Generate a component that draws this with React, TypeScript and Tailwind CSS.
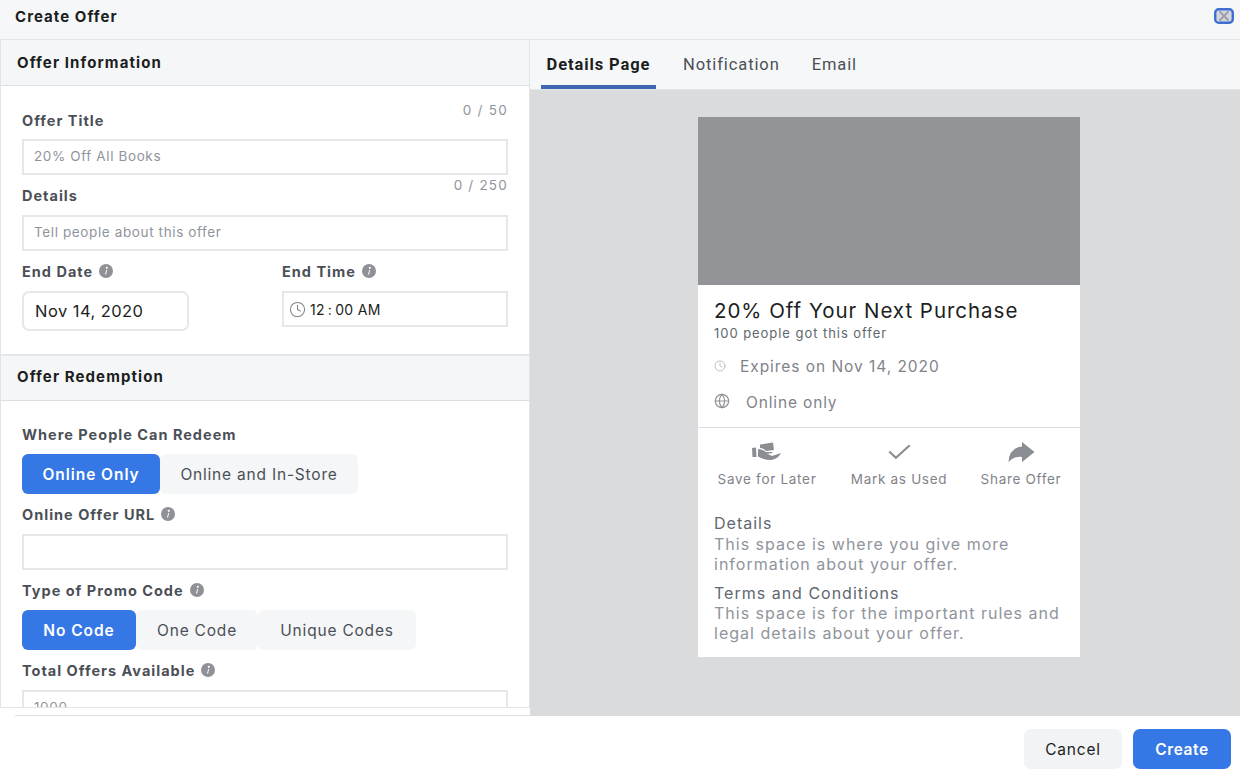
import React from "react";
import { Clock, Globe } from "lucide-react";

const font = { fontFamily: "Inter, 'Liberation Sans', sans-serif" };
const roboto = { fontFamily: "Roboto, 'Liberation Sans', sans-serif" };

function Info() {
  return (
    <svg width="14" height="14" viewBox="0 0 14 14" className="shrink-0 -mt-[2px]">
      <circle cx="7" cy="7" r="7" fill="#8f9196" />
      <circle cx="7.8" cy="3.8" r="1.1" fill="#fff" />
      <path d="M7.2 6 L8.1 6 L7.1 10.6 L6 10.6 Z" fill="#fff" />
    </svg>
  );
}

function Label({ children, info }: { children: React.ReactNode; info?: boolean }) {
  return (
    <div className="flex items-center gap-[6px] h-[20px] text-[14.5px] font-bold text-[#4b4f56] tracking-[1px] whitespace-nowrap">
      <span>{children}</span>
      {info && <Info />}
    </div>
  );
}

function Field({ placeholder, className = "" }: { placeholder?: string; className?: string }) {
  return (
    <div className={`h-[36px] border-2 border-[#e6e7e9] bg-white flex items-center px-[10px] pb-[2px] text-[13.5px] text-[#90949c] tracking-[0.62px] ${className}`}>
      {placeholder}
    </div>
  );
}

function SectionHead({ children, className = "" }: { children: React.ReactNode; className?: string }) {
  return (
    <div className={`bg-[#f5f6f7] border-b border-[#dddfe2] pl-[16px] flex items-center text-[15px] font-bold text-[#1c1e21] tracking-[1.1px] shrink-0 ${className}`}>
      {children}
    </div>
  );
}

function Seg({ children, on, w }: { children: React.ReactNode; on?: boolean; w: string }) {
  return (
    <div
      className={`h-[40px] pt-[1px] rounded-[6px] flex items-center justify-center text-[15.5px] whitespace-nowrap ${w} ${
        on ? "bg-[#3578e5] text-white font-semibold tracking-[0.95px]" : "bg-[#f5f6f7] text-[#4b4f56] tracking-[0.8px]"
      }`}
    >
      {children}
    </div>
  );
}

function Action({ icon, label, w }: { icon: React.ReactNode; label: string; w: string }) {
  return (
    <div className={`flex flex-col items-center ${w}`}>
      <div className="h-[24px] flex items-center justify-center">{icon}</div>
      <div className="mt-[5px] text-[13.5px] text-[#7f8389] tracking-[0.7px] whitespace-nowrap">{label}</div>
    </div>
  );
}

export default function App() {
  return (
    <div className="w-[1240px] h-[780px] bg-white flex flex-col overflow-hidden" style={font}>
      <div className="h-[40px] shrink-0 bg-[#f6f7f8] border-b border-[#e3e4e6] flex items-center justify-between pl-[15px] pr-[6px]">
        <span className="text-[15px] font-bold text-[#1c1e21] -mt-[5px] tracking-[1.05px]">Create Offer</span>
        <svg width="20" height="16" viewBox="0 0 20 16" className="-mt-[8px]">
          <rect x="1.2" y="1.2" width="17.6" height="13.6" rx="3.5" fill="#d3d6dc" stroke="#3e6fd0" strokeWidth="2.4" />
          <path d="M5.5 3.5 L14.5 12.5 M14.5 3.5 L5.5 12.5" stroke="#9aa0aa" strokeWidth="2" />
        </svg>
      </div>

      <div className="h-[676px] shrink-0 flex">
        <div className="w-[530px] shrink-0 flex flex-col bg-white">
          <div className="h-[668px] overflow-hidden shrink-0 border-l border-r border-[#e3e4e6] border-b">
            <SectionHead className="h-[46px] pt-[1px]">Offer Information</SectionHead>
            <div className="pl-[21px] pr-[21px] h-[268px]">
              <div className="h-[23px] pt-[14px] text-right text-[13.5px] text-[#90949c] leading-[20px] tracking-[1.25px]">0 / 50</div>
              <div className="mt-[2px]"><Label>Offer Title</Label></div>
              <Field placeholder="20% Off All Books" className="mt-[8px]" />
              <div className="h-[20px] text-right text-[13.5px] text-[#90949c] leading-[20px] tracking-[1.2px]">0 / 250</div>
              <div className="-mt-[9px]"><Label>Details</Label></div>
              <Field placeholder="Tell people about this offer" className="mt-[9px]" />
              <div className="mt-[11px] flex">
                <div className="w-[260px]">
                  <Label info>End Date</Label>
                  <div className="mt-[9px] w-[167px] h-[40px] rounded-[7px] border-2 border-[#e6e7e9] flex items-center pl-[11px] text-[16.5px] text-[#1c1e21] tracking-[0.45px]">
                    Nov 14, 2020
                  </div>
                </div>
                <div className="flex-1">
                  <Label info>End Time</Label>
                  <div className="mt-[9px] h-[36px] border-2 border-[#e6e7e9] flex items-center pl-[5px] gap-[4px] text-[14px] text-[#1c1e21]">
                    <Clock size={17} strokeWidth={1.5} color="#7f8389" />
                    <span className="tracking-[0.35px]">12{"\u2009"}:{"\u2009"}00 AM</span>
                  </div>
                </div>
              </div>
            </div>
            <SectionHead className="h-[47px] border-t-2 border-t-[#e6e7e9] pb-[2px]">Offer Redemption</SectionHead>
            <div className="pl-[21px] pr-[21px]">
              <div className="pt-[24px]"><Label>Where People Can Redeem</Label></div>
              <div className="mt-[9px] flex">
                <Seg on w="w-[138px]">Online Only</Seg>
                <Seg w="w-[198px]">Online and In-Store</Seg>
              </div>
              <div className="mt-[11px]"><Label info>Online Offer URL</Label></div>
              <Field className="mt-[9px]" />
              <div className="mt-[11px]"><Label info>Type of Promo Code</Label></div>
              <div className="mt-[9px] flex">
                <Seg on w="w-[114px]">No Code</Seg>
                <Seg w="w-[122px]">One Code</Seg>
                <Seg w="w-[158px]">Unique Codes</Seg>
              </div>
              <div className="mt-[11px]"><Label info>Total Offers Available</Label></div>
              <Field placeholder="1000" className="mt-[9px]" />
            </div>
          </div>
          <div className="flex-1 pl-[15px]">
            <div className="h-full border-b border-[#dfe0e2]" />
          </div>
        </div>

        <div className="flex-1 flex flex-col min-w-0">
          <div className="h-[50px] shrink-0 bg-[#f6f7f8] border-b border-[#e3e4e6] flex pl-[11px] text-[16.5px] tracking-[0.9px]" style={roboto}>
            <div className="w-[115px] h-[49px] border-b-[4px] border-[#4267b2] flex items-center justify-center font-bold text-[#1c1e21] pt-[5px]">
              Details Page
            </div>
            <div className="ml-[27px] h-[49px] pt-[2px] flex items-center text-[#4b4f56]">Notification</div>
            <div className="ml-[32px] h-[49px] pt-[2px] flex items-center text-[#4b4f56]">Email</div>
          </div>
          <div className="flex-1 bg-[#dadbdd] pt-[27px] pl-[168px]">
            <div className="w-[382px] h-[540px] bg-white flex flex-col">
              <div className="h-[168px] bg-[#939497] shrink-0" />
              <div className="pl-[16px]">
                <div className="mt-[13px] text-[20.5px] leading-[26px] text-[#1c1e21] tracking-[0.97px] whitespace-nowrap">20% Off Your Next Purchase</div>
                <div className="mt-[1px] text-[13px] leading-[16px] text-[#606770] tracking-[0.95px]">100 people got this offer</div>
                <div className="mt-[15px] h-[22px] flex items-center text-[15.5px] text-[#7f8389] tracking-[0.95px]">
                  <Clock size={12} strokeWidth={1.5} color="#a8abaf" className="mr-[14px] -mt-[2px]" />
                  Expires on Nov 14, 2020
                </div>
                <div className="mt-[14px] h-[22px] flex items-center text-[15.5px] text-[#7f8389] tracking-[0.85px]">
                  <Globe size={16} strokeWidth={1.8} color="#8f9196" className="mr-[16px] -mt-[4px]" />
                  Online only
                </div>
              </div>
              <div className="mt-[13px] border-t border-[#dddfe2] pt-[12px] pl-[8px] flex">
                <Action
                  w="w-[122px]"
                  label="Save for Later"
                  icon={
                    <svg width="30" height="20" viewBox="0 0 30 20" fill="#8a8d92">
                      <path d="M0 6 L4 5.5 L4.5 15 L0.5 15 Z" />
                      <path d="M8 2.5 L21 0.5 L22 8 L14 9 Q11 6 8 6 Z" />
                      <path d="M6 7 Q11 7.5 14 10 L21 10 Q19.5 12 15 11.5 L20 14 L29 11 Q26 17 19 18 Q12 18 6 14.5 Z" />
                    </svg>
                  }
                />
                <Action
                  w="w-[142px]"
                  label="Mark as Used"
                  icon={
                    <svg width="25" height="16" viewBox="0 0 26 18" fill="none" stroke="#8a8d92" strokeWidth="2.4">
                      <path d="M1.5 8.5 L9 15.5 L24.5 1.5" />
                    </svg>
                  }
                />
                <Action
                  w="w-[102px]"
                  label="Share Offer"
                  icon={
                    <svg width="27" height="21" viewBox="0 0 27 21" fill="#8a8d92">
                      <path d="M14 0 L26.5 10 L14 20 L14 15 Q5 14 0.5 20.5 Q1 6 14 4.5 Z" />
                    </svg>
                  }
                />
              </div>
              <div className="pl-[16px] pr-[16px] mt-[24px] text-[16px] leading-[20px] tracking-[1px] whitespace-nowrap">
                <div className="text-[#606770]">Details</div>
                <div className="mt-[1px] text-[#90949c]">This space is where you give more<br />information about your offer.</div>
                <div className="mt-[9px] text-[#606770]">Terms and Conditions</div>
                <div className="text-[#90949c]">This space is for the important rules and<br />legal details about your offer.</div>
              </div>
            </div>
          </div>
        </div>
      </div>

      <div className="flex-1 bg-white flex justify-end items-start pt-[13px] pr-[9px] gap-[11px]">
        <div className="w-[98px] h-[40px] pt-[1px] rounded-[7px] bg-[#f2f3f4] flex items-center justify-center text-[15.5px] text-[#1c1e21] tracking-[0.8px]">Cancel</div>
        <div className="w-[98px] h-[40px] pt-[1px] rounded-[7px] bg-[#3578e5] flex items-center justify-center text-[15.5px] font-semibold text-white tracking-[0.6px]">Create</div>
      </div>
    </div>
  );
}
